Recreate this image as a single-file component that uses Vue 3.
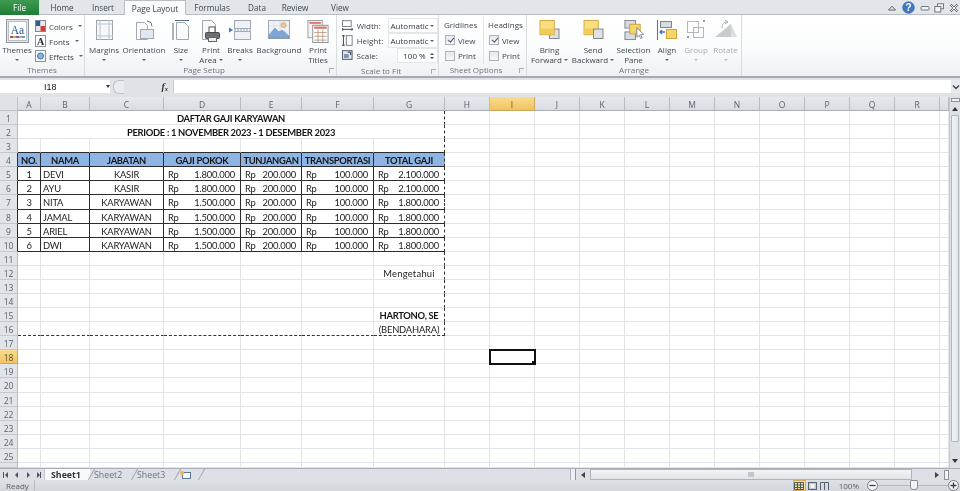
<script setup>
import { computed } from 'vue'

const colNames = ['A','B','C','D','E','F','G','H','I','J','K','L','M','N','O','P','Q','R','']
const colWidths = [23,49,74,77,61,72,71,45,45,45,45,45,45,45,45,45,45,45,9]
const gridStyle = computed(() => ({
  gridTemplateColumns: '18px ' + colWidths.map(w => w + 'px').join(' ')
}))

const employees = [
  ['1','DEVI','KASIR','1.800.000','200.000','100.000','2.100.000'],
  ['2','AYU','KASIR','1.800.000','200.000','100.000','2.100.000'],
  ['3','NITA','KARYAWAN','1.500.000','200.000','100.000','1.800.000'],
  ['4','JAMAL','KARYAWAN','1.500.000','200.000','100.000','1.800.000'],
  ['5','ARIEL','KARYAWAN','1.500.000','200.000','100.000','1.800.000'],
  ['6','DWI','KARYAWAN','1.500.000','200.000','100.000','1.800.000']
]
const heads = ['NO.','NAMA','JABATAN','GAJI POKOK','TUNJANGAN','TRANSPORTASI','TOTAL GAJI']

const cells = computed(() => {
  const out = []
  const push = (key, cls, text = '', money = null) => out.push({ key, cls, text, money })
  for (const [i, n] of colNames.entries()) {
    if (i === 0) push('corner', 'corner')
    push('h' + i, 'colhead' + (n === 'I' ? ' selhead' : ''), n)
  }
  for (let r = 1; r <= 26; r++) {
    const tableRow = r >= 4 && r <= 10
    push('r' + r, 'rowhead' + (r === 18 ? ' selhead' : '') + (tableRow ? ' dark-r' : ''), r === 26 ? '' : String(r))
    let start = 0
    if (r === 1 || r === 2) {
      push('t' + r, 'span7 bold center dash-r', r === 1 ? 'DAFTAR GAJI KARYAWAN' : 'PERIODE : 1 NOVEMBER 2023 - 1 DESEMBER 2023')
      start = 7
    }
    for (let c = start; c < colNames.length; c++) {
      const k = r + '-' + c
      let cls = ''
      let text = ''
      let money = null
      if (c <= 6) {
        if (r === 3) cls += ' dark-b'
        if (c === 6 && r <= 16) cls += ' dash-r'
        if (r === 16) cls += ' dash-b'
      }
      if (c <= 6 && r === 4) {
        cls += ' head center bold dark-b' + (c < 6 ? ' dark-r' : '')
        text = heads[c]
      } else if (c <= 6 && tableRow) {
        const v = employees[r - 5][c]
        cls += ' dark-b' + (c < 6 ? ' dark-r' : '')
        if (c === 0 || c === 2) { cls += ' center'; text = v }
        else if (c === 1) { cls += ' left'; text = v }
        else { money = v; cls += ' money' }
      }
      if (c === 6 && r === 12) { cls += ' center sig'; text = 'Mengetahui' }
      if (c === 6 && r === 15) { cls += ' center bold'; text = 'HARTONO, SE' }
      if (c === 6 && r === 16) { cls += ' center'; text = '(BENDAHARA)' }
      if (c === 8 && r === 18) cls += ' active'
      push(k, cls, text, money)
    }
  }
  return out
})
</script>

<template>
  <div class="app">
    <!-- ribbon tabs -->
    <div class="tabs">
      <div class="tab file">File</div>
      <div class="tab w-home">Home</div>
      <div class="tab w-insert">Insert</div>
      <div class="tab on">Page Layout</div>
      <div class="tab w-form">Formulas</div>
      <div class="tab w-data">Data</div>
      <div class="tab w-review">Review</div>
      <div class="tab w-view">View</div>
      <div class="winctl">
        <svg width="10" height="10" viewBox="0 0 10 10"><path d="M1.5 7 5 3.2 8.5 7Z" fill="none" stroke="#5d646c"/></svg>
        <svg width="13" height="13" viewBox="0 0 13 13"><circle cx="6.5" cy="6.5" r="5.8" fill="#3f78c4" stroke="#2d5b9e" stroke-width=".6"/><text x="6.5" y="10" text-anchor="middle" class="q">?</text></svg>
        <svg width="10" height="10" viewBox="0 0 10 10"><rect x="1" y="3.5" width="8" height="3.5" rx="1" fill="#f3f4f6" stroke="#707780"/></svg>
        <svg width="10" height="10" viewBox="0 0 10 10"><rect x="3.5" y=".8" width="6" height="5" fill="#f3f4f6" stroke="#707780"/><rect x=".8" y="3.5" width="6" height="5.5" fill="#f3f4f6" stroke="#707780"/></svg>
        <svg width="10" height="10" viewBox="0 0 10 10"><path d="M1.5 1.5 8.5 8.5M8.5 1.5 1.5 8.5" stroke="#707780" stroke-width="2.4"/><path d="M1.5 1.5 8.5 8.5M8.5 1.5 1.5 8.5" stroke="#f3f4f6" stroke-width="1"/></svg>
      </div>
    </div>

    <!-- ribbon -->
    <div class="ribbon">
      <section class="group g-themes">
        <div class="body">
          <div class="big" style="width:34px">
            <div class="ico themes-ico">
              <svg width="23" height="24" viewBox="0 0 23 24">
                <rect x=".5" y=".5" width="22" height="23" fill="#e4e7eb" stroke="#8f959d"/>
                <rect x="2.5" y="2.5" width="18" height="19" fill="#fff" stroke="#b9bec4"/>
                <text x="11.5" y="14.5" text-anchor="middle" class="aa">Aa</text>
                <path d="M4 18h3" stroke="#c0504d" stroke-width="2"/><path d="M7 18h3" stroke="#9bbb59" stroke-width="2"/><path d="M10 18h3" stroke="#8064a2" stroke-width="2"/><path d="M13 18h3" stroke="#f79646" stroke-width="2"/><path d="M16 18h3" stroke="#4bacc6" stroke-width="2"/>
              </svg>
            </div>
            <div class="lbl">Themes</div>
            <div class="lbl"><i class="caret"></i></div>
          </div>
          <div class="small-list">
            <div class="small">
              <svg width="11" height="12" viewBox="0 0 11 12"><rect width="5.5" height="6" fill="#2f5c9a"/><rect x="5.5" width="5.5" height="6" fill="#ece9e6"/><rect y="6" width="5.5" height="6" fill="#e6e6e6"/><rect x="5.5" y="6" width="5.5" height="6" fill="#c8413e"/><rect x=".5" y=".5" width="10" height="11" fill="none" stroke="#7f8a98"/></svg>
              <span>Colors</span><i class="caret"></i>
            </div>
            <div class="small">
              <svg width="11" height="12" viewBox="0 0 11 12"><rect x=".5" y=".5" width="10" height="11" fill="#fff" stroke="#8a929c"/><text x="5.5" y="9.6" text-anchor="middle" class="fa">A</text></svg>
              <span>Fonts</span><i class="caret"></i>
            </div>
            <div class="small">
              <svg width="11" height="12" viewBox="0 0 11 12"><rect x=".5" y=".5" width="10" height="11" fill="#f6f7f9" stroke="#8a929c"/><circle cx="5.5" cy="6" r="3" fill="#8fb4e0" stroke="#3c70b4"/></svg>
              <span>Effects</span><i class="caret"></i>
            </div>
          </div>
        </div>
        <div class="glabel">Themes</div>
      </section>

      <section class="group g-setup">
        <div class="body">
          <div class="big" style="width:38px">
            <div class="ico"><svg width="17" height="20" viewBox="0 0 17 20"><rect x=".5" y=".5" width="16" height="19" fill="#f7f8fa" stroke="#9aa2ac"/><path d="M4 0v20M13 0v20M0 4h17M0 16h17" stroke="#bcc3cc"/></svg></div>
            <div class="lbl">Margins</div><div class="lbl"><i class="caret"></i></div>
          </div>
          <div class="big" style="width:42px">
            <div class="ico"><svg width="20" height="20" viewBox="0 0 20 20"><path d="M2.5 2.500h8l3 3v14h-11z" fill="#fbfbfc" stroke="#a2a9b2"/><rect x="6.5" y="9.500" width="13" height="9" fill="#e3e8ee" stroke="#a2a9b2"/><path d="M13 1l4 1.500 1 4" fill="none" stroke="#66707c"/></svg></div>
            <div class="lbl">Orientation</div><div class="lbl"><i class="caret"></i></div>
          </div>
          <div class="big" style="width:32px">
            <div class="ico"><svg width="18" height="20" viewBox="0 0 18 20"><path d="M4.5 2.500h8l4 4v13h-12z" fill="#fbfbfc" stroke="#a2a9b2"/><path d="M1 3v17" stroke="#5c6c80"/><path d="M3 .5h14" stroke="#5c6c80"/></svg></div>
            <div class="lbl">Size</div><div class="lbl"><i class="caret"></i></div>
          </div>
          <div class="big" style="width:28px">
            <div class="ico"><svg width="20" height="22" viewBox="0 0 20 22"><path d="M1.5.5h9l4 4v15h-13z" fill="#f7f8fa" stroke="#a2a9b2"/><rect x="8" y="7" width="6" height="6" fill="#fff" stroke="#555"/><rect x="4.5" y="12.500" width="14" height="6" rx="1" fill="#6b7077" stroke="#46494e"/><rect x="7.5" y="17.500" width="8" height="4" fill="#eee" stroke="#666"/></svg></div>
            <div class="lbl">Print</div><div class="lbl">Area<i class="caret il"></i></div>
          </div>
          <div class="big" style="width:30px">
            <div class="ico"><svg width="22" height="20" viewBox="0 0 22 20"><rect x="5.5" y=".5" width="16" height="8" fill="#eef1f5" stroke="#a2a9b2"/><rect x="5.5" y="11.500" width="16" height="8" fill="#eef1f5" stroke="#a2a9b2"/><path d="M0 7.500 4 10 0 12.500z" fill="#3f78c4"/><path d="M5 10h17" stroke="#7f9fc8" stroke-dasharray="2 1"/></svg></div>
            <div class="lbl">Breaks</div><div class="lbl"><i class="caret"></i></div>
          </div>
          <div class="big" style="width:48px">
            <div class="ico"><svg width="22" height="19" viewBox="0 0 22 19"><rect x=".5" y=".5" width="21" height="18" fill="#eef2f7" stroke="#a2a9b2"/><path d="M1 6h20M1 12h20M6 1v17M12 1v17M17 1v17" stroke="#d4dae2" stroke-width=".7"/><circle cx="15.500" cy="5" r="2.600" fill="#f2c48a" stroke="#d79b58" stroke-width=".6"/><path d="M1 15 7 8l4 4 3-2 7 6v2H1z" fill="#7da6d4" stroke="#5b86b8" stroke-width=".5"/></svg></div>
            <div class="lbl">Background</div>
          </div>
          <div class="big" style="width:30px">
            <div class="ico"><svg width="22" height="23" viewBox="0 0 22 24"><rect x=".5" y=".5" width="15" height="18" fill="#f7f3ee" stroke="#9a9ea6"/><path d="M2 3h12" stroke="#d9796a" stroke-width="2"/><rect x="5.500" y="5.500" width="16" height="18" fill="#fff" stroke="#8a8f98"/><path d="M7 8h13" stroke="#d9796a" stroke-width="2.400"/><path d="M7 13h13M7 17h13M7 21h13M11 10v13M16 10v13" stroke="#b08a70" stroke-width=".8"/></svg></div>
            <div class="lbl">Print</div><div class="lbl">Titles</div>
          </div>
        </div>
        <div class="glabel lh">Page Setup<i class="launcher"></i></div>
      </section>

      <section class="group g-scale">
        <div class="body col">
          <div class="srow">
            <svg width="11" height="11" viewBox="0 0 11 11"><rect x=".5" y=".5" width="9" height="6" fill="#fff" stroke="#76808c"/><path d="M0 9.500h11M1 8l-1 1.500 1 1.500M10 8l1 1.500-1 1.500" stroke="#3b4653" fill="none"/></svg>
            <span class="slabel">Width:</span><span class="combo">Automatic<i class="caret"></i></span>
          </div>
          <div class="srow">
            <svg width="11" height="11" viewBox="0 0 11 11"><rect x="4.500" y=".5" width="6" height="10" fill="#fff" stroke="#76808c"/><path d="M1.500 0v11M0 1l1.500-1 1.500 1M0 10l1.500 1 1.500-1" stroke="#3b4653" fill="none"/></svg>
            <span class="slabel">Height:</span><span class="combo">Automatic<i class="caret"></i></span>
          </div>
          <div class="srow">
            <svg width="11" height="11" viewBox="0 0 11 11"><rect x=".5" y=".5" width="10" height="9" fill="#dfe6ef" stroke="#4a5668"/><rect x="2" y="4" width="5" height="4" fill="#7e93ad"/><path d="M6 2h3v3" fill="none" stroke="#27323f"/></svg>
            <span class="slabel">Scale:</span><span class="combo narrow">100 %<span class="spin"><i class="up"></i><i class="down"></i></span></span>
          </div>
        </div>
        <div class="glabel lh">Scale to Fit<i class="launcher"></i></div>
      </section>

      <section class="group g-sheet">
        <div class="body sheetopts">
          <div class="optcol">
            <div class="opthead">Gridlines</div>
            <label class="opt"><i class="chk on"></i>View</label>
            <label class="opt"><i class="chk"></i>Print</label>
          </div>
          <div class="optcol second">
            <div class="opthead">Headings</div>
            <label class="opt"><i class="chk on"></i>View</label>
            <label class="opt"><i class="chk"></i>Print</label>
          </div>
        </div>
        <div class="glabel lh">Sheet Options<i class="launcher"></i></div>
      </section>

      <section class="group g-arrange">
        <div class="body">
          <div class="big" style="width:45px">
            <div class="ico"><svg width="21" height="19" viewBox="0 0 21 20"><rect x="10.500" y="9.500" width="10" height="10" fill="#dfe1e4" stroke="#7f858c"/><rect x=".5" y=".5" width="15" height="15" fill="#f8de80" stroke="#d3a93e"/><rect x="1" y="9" width="14" height="6" fill="#f3cb5a"/></svg></div>
            <div class="lbl">Bring</div><div class="lbl">Forward<i class="caret il"></i></div>
          </div>
          <div class="big" style="width:42px">
            <div class="ico"><svg width="21" height="19" viewBox="0 0 21 20"><rect x=".5" y=".5" width="15" height="15" fill="#f8de80" stroke="#d3a93e"/><rect x="1" y="9" width="14" height="6" fill="#f3cb5a"/><rect x="10.500" y="9.500" width="10" height="10" fill="#dfe1e4" stroke="#7f858c"/></svg></div>
            <div class="lbl">Send</div><div class="lbl">Backward<i class="caret il"></i></div>
          </div>
          <div class="big" style="width:39px">
            <div class="ico"><svg width="20" height="21" viewBox="0 0 20 22"><rect x=".5" y=".5" width="11" height="8" fill="#d8dce1" stroke="#80868e"/><rect x=".5" y="12.500" width="11" height="8" fill="#d8dce1" stroke="#80868e"/><rect x="5.500" y="4.500" width="11" height="10" fill="#f6d568" stroke="#cfa33a"/><path d="M13 8v10l2.500-2 1.500 3.500 1.500-.7-1.500-3.300 3-.5z" fill="#fff" stroke="#5a6f8c" stroke-width=".8"/></svg></div>
            <div class="lbl">Selection</div><div class="lbl">Pane</div>
          </div>
          <div class="big" style="width:28px">
            <div class="ico"><svg width="20" height="20" viewBox="0 0 20 20"><path d="M.5 0v20" stroke="#3f78c4"/><rect x="3.500" y="1.500" width="11" height="6" fill="#d8dce1" stroke="#80868e"/><rect x="9.500" y="9.500" width="10" height="9" fill="#f6d568" stroke="#cfa33a"/><path d="M8 12H3M5 10l-2 2 2 2" fill="none" stroke="#3f78c4" stroke-width="1.300"/></svg></div>
            <div class="lbl">Align</div><div class="lbl"><i class="caret"></i></div>
          </div>
          <div class="big dim" style="width:30px">
            <div class="ico"><svg width="20" height="20" viewBox="0 0 20 20"><rect x="1.500" y="1.500" width="11" height="11" fill="none" stroke="#b4b8bd"/><rect x="7.500" y="7.500" width="10" height="10" fill="none" stroke="#b4b8bd"/><path d="M17 1h2M1 17h2" stroke="#777" stroke-width="1.500"/></svg></div>
            <div class="lbl">Group</div><div class="lbl"><i class="caret"></i></div>
          </div>
          <div class="big dim" style="width:29px">
            <div class="ico"><svg width="22" height="18" viewBox="0 0 22 18"><path d="M0 17 16 4v13z" fill="#c9cccf"/><path d="M16 4 22 17h-6z" fill="#dcdee0"/><path d="M7 8C7 4 9 2 12 2M10 0l3 2-3 2" fill="none" stroke="#a8acb0"/></svg></div>
            <div class="lbl">Rotate</div><div class="lbl"><i class="caret"></i></div>
          </div>
        </div>
        <div class="glabel">Arrange</div>
      </section>
    </div>

    <!-- formula bar -->
    <div class="fbar">
      <div class="namebox"><span class="nm">I18</span><i class="caret dk"></i></div>
      <div class="fpill"><span class="pillend"></span><span class="fx">f<sub>x</sub></span></div>
      <div class="finput"></div>
      <div class="fexpand"><svg width="8" height="8" viewBox="0 0 8 8"><path d="M1 2.500 4 5.500 7 2.500" fill="none" stroke="#444" stroke-width="1.400"/></svg></div>
    </div>

    <!-- sheet -->
    <div class="sheetwrap">
      <div class="grid" :style="gridStyle">
        <div v-for="c in cells" :key="c.key" class="cell" :class="c.cls">
          <template v-if="c.money"><span>Rp</span><span>{{ c.money }}</span></template>
          <template v-else>{{ c.text }}</template>
        </div>
      </div>
      <div class="vscroll">
        <div class="splitv"></div>
        <i class="tri-up"></i>
        <div class="vthumb"></div>
        <i class="tri-down"></i>
      </div>
    </div>

    <!-- sheet tabs -->
    <div class="strip">
      <div class="nav">
        <svg width="40" height="8" viewBox="0 0 40 8"><g fill="#4c535b"><path d="M1 1h1v6H1zM6 1v6L3 4zM16 1v6l-3-3zM25 1v6l3-3zM35 1v6l3-3zM38 1h1v6h-1z"/></g></svg>
      </div>
      <div class="stab act">Sheet1</div>
      <div class="stab">Sheet2</div>
      <div class="stab">Sheet3</div>
      <div class="stab add"><svg width="13" height="10" viewBox="0 0 13 10"><rect x="3.500" y="2.500" width="8" height="6" fill="#f2f5f9" stroke="#5f7896"/><circle cx="3" cy="3" r="2" fill="#f1b64c"/></svg></div>
      <div class="stripfill"></div>
      <div class="hsplit"></div>
      <i class="tri-left"></i>
      <div class="hthumb"><i class="grip"></i></div>
      <i class="tri-right"></i>
      <div class="hbox"></div>
      <div class="hcorner"></div>
    </div>

    <!-- status bar -->
    <div class="status">
      <span class="ready">Ready</span>
      <div class="sright">
        <div class="vbtn act"><svg width="10" height="8" viewBox="0 0 10 8"><path d="M.5.5h9v7h-9zM.5 3h9M.5 5.500h9M3.500.5v7M6.500.5v7" fill="none" stroke="#4e5964"/></svg></div>
        <div class="vbtn"><svg width="9" height="8" viewBox="0 0 9 8"><rect x=".5" y=".5" width="8" height="7" fill="#c6cbd2" stroke="#59636f"/><rect x="2.500" y="2" width="4" height="4" fill="#f1f3f5"/></svg></div>
        <div class="vbtn"><svg width="9" height="8" viewBox="0 0 9 8"><path d="M.5 8V.5h8V8M4.500.5V8" fill="none" stroke="#59636f"/></svg></div>
        <span class="pct">100%</span>
        <svg class="round" width="11" height="11" viewBox="0 0 11 11"><circle cx="5.500" cy="5.500" r="5" fill="#f4f5f7" stroke="#747c86"/><path d="M2.500 5.500h6" stroke="#39414a" stroke-width="1.300"/></svg>
        <div class="slider"><i class="knob"></i></div>
        <svg class="round" width="11" height="11" viewBox="0 0 11 11"><circle cx="5.500" cy="5.500" r="5" fill="#f4f5f7" stroke="#747c86"/><path d="M2.500 5.500h6M5.500 2.500v6" stroke="#39414a" stroke-width="1.300"/></svg>
      </div>
    </div>
  </div>
</template>

<style>
html, body { margin: 0; padding: 0; background: #fff; overflow: hidden; }
</style>

<style scoped>
.app {
  width: 960px;
  height: 491px;
  display: flex;
  flex-direction: column;
  overflow: hidden;
  font-family: "Open Sans", "Noto Sans", sans-serif;
  font-size: 8px;
  color: #3e4650;
  background: #fff;
  filter: blur(.3px);
}

/* tabs */
.tabs { height: 15px; flex: none; display: flex; align-items: stretch; background: #e2e5e9; box-shadow: inset 0 -1px 0 #b9bec4; }
.tab { display: flex; align-items: center; justify-content: center; font-size: 8.200px; color: #3f4750; }
.file { width: 39px; background: linear-gradient(#3d9c4e, #1f7c38); color: #fff; margin-right: 3px; }
.w-home { width: 40px; }
.w-insert { width: 42px; }
.on { width: 62px; background: #fafbfc; border: 1px solid #b9bec4; border-bottom: 0; box-sizing: border-box; }
.w-form { width: 52px; }
.w-data { width: 38px; }
.w-review { width: 38px; }
.w-view { width: 52px; }
.winctl { margin-left: auto; width: 72px; padding-right: 1px; display: flex; align-items: center; justify-content: space-between; }
.q { font: bold 10px "Liberation Sans", sans-serif; fill: #fff; }
.aa { font: 11.500px "Liberation Serif", serif; fill: #1f4f96; }
.fa { font: bold 10px "Liberation Serif", serif; fill: #1d2630; }

/* ribbon */
.ribbon { height: 63px; flex: none; box-sizing: border-box; display: flex; background: linear-gradient(#fff 0%, #fbfcfd 55%, #eef0f3 100%); border-bottom: 2px solid #a6abb1; }
.group { display: flex; flex-direction: column; box-sizing: border-box; border-right: 1px solid #d9dce0; padding-top: 2px; flex: none; }
.g-themes { width: 85px; }
.g-setup { width: 252px; }
.g-scale { width: 102px; }
.g-sheet { width: 88px; }
.g-arrange { width: 215px; }
.body { height: 47px; display: flex; flex: none; }
.glabel { position: relative; text-align: center; font-size: 8px; line-height: 12px; color: #6d7681; }
.glabel.lh { padding-right: 13px; }
.launcher { position: absolute; right: 2px; bottom: 3px; width: 4px; height: 4px; border: 1px solid #a8aeb5; border-width: 1px 0 0 1px; }
.big { display: flex; flex-direction: column; align-items: center; flex: none; }
.ico { height: 28px; display: flex; align-items: flex-start; justify-content: center; padding-top: 3px; box-sizing: border-box; }
.themes-ico { padding-top: 2px; }
.lbl { height: 9.500px; line-height: 9.500px; white-space: nowrap; text-align: center; font-size: 8px; }
.dim .lbl { color: #a5abb2; }
.caret { display: inline-block; width: 0; height: 0; border: 2px solid transparent; border-top: 2.500px solid #5a626c; border-bottom: 0; vertical-align: middle; }
.caret.il { margin-left: 2px; }
.dim .caret { border-top-color: #b7bcc2; }
.small-list { display: flex; flex-direction: column; margin-top: 1.500px; }
.small { height: 15.500px; display: flex; align-items: center; gap: 3px; }
.small svg { margin-left: 1px; }
.small .caret { margin-left: 2px; }

.col { flex-direction: column; padding: 1px 0 0 5px; }
.srow { display: flex; align-items: center; height: 15px; }
.slabel { margin-left: 4px; width: 33px; }
.combo { box-sizing: border-box; width: 52px; height: 15px; margin-left: -1px; background: #fff; border: 1px solid #e4e7ea; display: flex; align-items: center; justify-content: space-between; padding: 0 3px 0 2px; color: #2f363e; }
.combo.narrow { width: 42px; margin-left: 9px; padding-left: 5px; }
.spin { display: flex; flex-direction: column; gap: 2px; }
.up { width: 0; height: 0; border: 2px solid transparent; border-bottom: 2.500px solid #444; border-top: 0; }
.down { width: 0; height: 0; border: 2px solid transparent; border-top: 2.500px solid #444; border-bottom: 0; }

.sheetopts { padding-left: 5px; }
.optcol { width: 39px; flex: none; }
.optcol.second { border-left: 1px solid #e2e4e8; padding-left: 4px; width: 38px; }
.opthead { height: 15.500px; line-height: 16px; }
.opt { display: flex; align-items: center; gap: 3px; height: 15.500px; padding-left: 1px; }
.chk { position: relative; width: 10px; height: 10px; box-sizing: border-box; border: 1px solid #aeb3ba; background: linear-gradient(#e6e8ec, #f6f7f8); display: block; }
.chk.on::after { content: ""; position: absolute; left: 2.500px; top: 0; width: 2.500px; height: 5px; border: solid #4a5a70; border-width: 0 1px 1px 0; transform: rotate(40deg); }

/* formula bar */
.fbar { height: 19px; flex: none; box-sizing: border-box; padding: 2px 0 4px; display: flex; background: #dfe2e6; }
.namebox { width: 110px; background: #fff; display: flex; align-items: center; color: #111; }
.nm { margin-left: 44px; font-family: "Liberation Sans", sans-serif; font-size: 9px; }
.caret.dk { margin-left: 49px; border-top-color: #333; border-width: 3px 2.500px 0; }
.fpill { width: 63px; display: flex; align-items: center; justify-content: space-between; box-sizing: border-box; background: #dfe2e6; padding-left: 3px; }
.pillend { width: 10px; height: 12px; border-radius: 6px 0 0 6px; border: 1px solid #bcc1c7; border-right: 0; background: #e9ebee; }
.fx { font: italic bold 10px "Liberation Serif", serif; color: #333; padding-right: 5px; }
.fx sub { font-size: 6.500px; vertical-align: -1px; }
.finput { flex: 1; background: #fff; border-left: 1px solid #c5cad0; }
.fexpand { width: 9px; display: flex; align-items: center; justify-content: center; background: #e7e9ed; }

/* sheet */
.sheetwrap { display: flex; flex: none; height: 371px; overflow: hidden; }
.grid {
  display: grid;
  width: 949px;
  height: 371px;
  grid-template-rows: 14px repeat(25, 14.080px) 5px;
  font-family: Lato, "Open Sans", sans-serif;
  font-size: 9.400px;
  letter-spacing: -.2px;
  color: #222;
  background: #fff;
  flex: none;
}
.cell {
  box-sizing: border-box;
  border-right: 1px solid #e1e4e8;
  border-bottom: 1px solid #e1e4e8;
  line-height: 15px;
  white-space: nowrap;
  overflow: hidden;
  min-width: 0;
}
.corner { background: #dfe3e8; border-color: #bcc2c9; }
.colhead { background: linear-gradient(#e6e9ed, #d9dde2); border-right: 1px solid #b6bcc4; border-bottom: 1px solid #a8aeb6; text-align: center; font-family: "Open Sans", sans-serif; font-size: 8.500px; letter-spacing: 0; color: #59626d; }
.rowhead { background: #e1e4e8; border-right: 1px solid #b6bcc4; border-bottom: 1px solid #c3c8ce; text-align: center; font-family: "Open Sans", sans-serif; font-size: 8.500px; letter-spacing: 0; color: #59626d; }
.selhead { background: linear-gradient(#f9dc8e, #f2c35f); color: #5d5030; border-color: #c9a75c; }
.span7 { grid-column: span 7; }
.center { text-align: center; }
.left { padding-left: 2px; }
.sig { letter-spacing: .25px; }
.bold { font-weight: 700; color: #141414; letter-spacing: -.3px; }
.head { background: #8db4e2; }
.money { display: flex; justify-content: space-between; padding: 0 5px 0 4px; }
.dark-r { border-right: 1px solid #2c2c2c; }
.dark-b { border-bottom: 1px solid #2c2c2c; }
.dash-r { border-right: 1px dashed #333; }
.dash-b { border-bottom: 1px dashed #333; }
.active { outline: 2px solid #111; outline-offset: -1px; position: relative; z-index: 2; overflow: visible; }
.active::after { content: ""; position: absolute; right: -1px; bottom: -1px; width: 3px; height: 3px; background: #111; }

.vscroll { flex: 1; display: flex; flex-direction: column; align-items: center; background: #dde1e6; border-left: 1px solid #c5cad0; box-sizing: border-box; }
.splitv { width: 9px; height: 4px; margin-top: 1px; background: #f2f3f5; border: 1px solid #8b929b; box-sizing: border-box; }
.tri-up { width: 0; height: 0; border: 3px solid transparent; border-bottom: 4px solid #333; border-top: 0; margin-top: 5px; }
.vthumb { flex: 1; width: 8px; margin: 4px 0 17px; box-sizing: border-box; background: linear-gradient(90deg, #f2f4f6, #e3e6ea); border: 1px solid #b1b7bf; border-radius: 1px; }
.tri-down { width: 0; height: 0; border: 3px solid transparent; border-top: 4px solid #333; border-bottom: 0; margin-bottom: 5px; }

/* sheet tabs */
.strip { height: 12px; flex: none; display: flex; align-items: stretch; background: #dde1e6; border-top: 1px solid #a9afb6; box-sizing: border-box; overflow: hidden; }
.nav { width: 45px; display: flex; align-items: center; justify-content: center; flex: none; box-sizing: border-box; border-right: 1px solid #c4c9cf; }
.stab { position: relative; display: flex; align-items: center; width: 43px; padding-left: 4px; font-size: 8.800px; color: #6c7580; flex: none; box-sizing: border-box; }
.stab::after { content: ""; position: absolute; right: -2px; top: -2px; width: 1px; height: 15px; background: #a4aab2; transform: rotate(30deg); }
.stab.act { background: #f8f9fb; color: #333; font-weight: 700; width: 45px; padding-left: 6px; }
.stab.add { width: 24px; padding-left: 3px; }
.stripfill { flex: 1; border-right: 1px solid #aab0b8; }
.hsplit { width: 4px; background: #eceef1; border-right: 1px solid #8f969f; }
.tri-left { align-self: center; width: 0; height: 0; border: 3px solid transparent; border-right: 4px solid #444; border-left: 0; margin: 0 5px; }
.hthumb { width: 322px; box-sizing: border-box; background: linear-gradient(#f2f4f6, #e1e4e8); border: 1px solid #aeb4bc; display: flex; align-items: center; justify-content: center; }
.grip { width: 6px; height: 5px; background: #c2c7cd; }
.tri-right { align-self: center; width: 0; height: 0; border: 3px solid transparent; border-left: 4px solid #444; border-right: 0; margin: 0 5px 0 23px; }
.hbox { width: 3px; background: #f2f3f5; border: 1px solid #8b929b; height: 8px; align-self: center; }
.hcorner { width: 11px; background: #dde1e6; }

/* status */
.status { height: 11px; flex: none; display: flex; align-items: center; background: linear-gradient(#dee1e5, #d2d6db); overflow: hidden; }
.ready { width: 35px; padding-left: 6px; box-sizing: border-box; border-right: 1px solid #b9bec4; color: #555e68; line-height: 11px; }
.sright { margin-left: auto; display: flex; align-items: center; height: 11px; padding-right: 1px; }
.vbtn { width: 12px; height: 11px; display: flex; align-items: center; justify-content: center; }
.vbtn.act { width: 13px; background: #f8e0a2; box-shadow: inset 0 0 0 1px #d9ab4f; margin-right: 1px; }
.pct { margin: 0 8px; color: #555e68; }
.round { flex: none; }
.slider { position: relative; width: 70px; height: 1px; background: #b6bbc2; }
.knob { position: absolute; left: 32px; top: -5px; width: 6px; height: 8px; background: #f2f3f5; border: 1px solid #868d96; border-radius: 1px 1px 3px 3px; }
</style>
